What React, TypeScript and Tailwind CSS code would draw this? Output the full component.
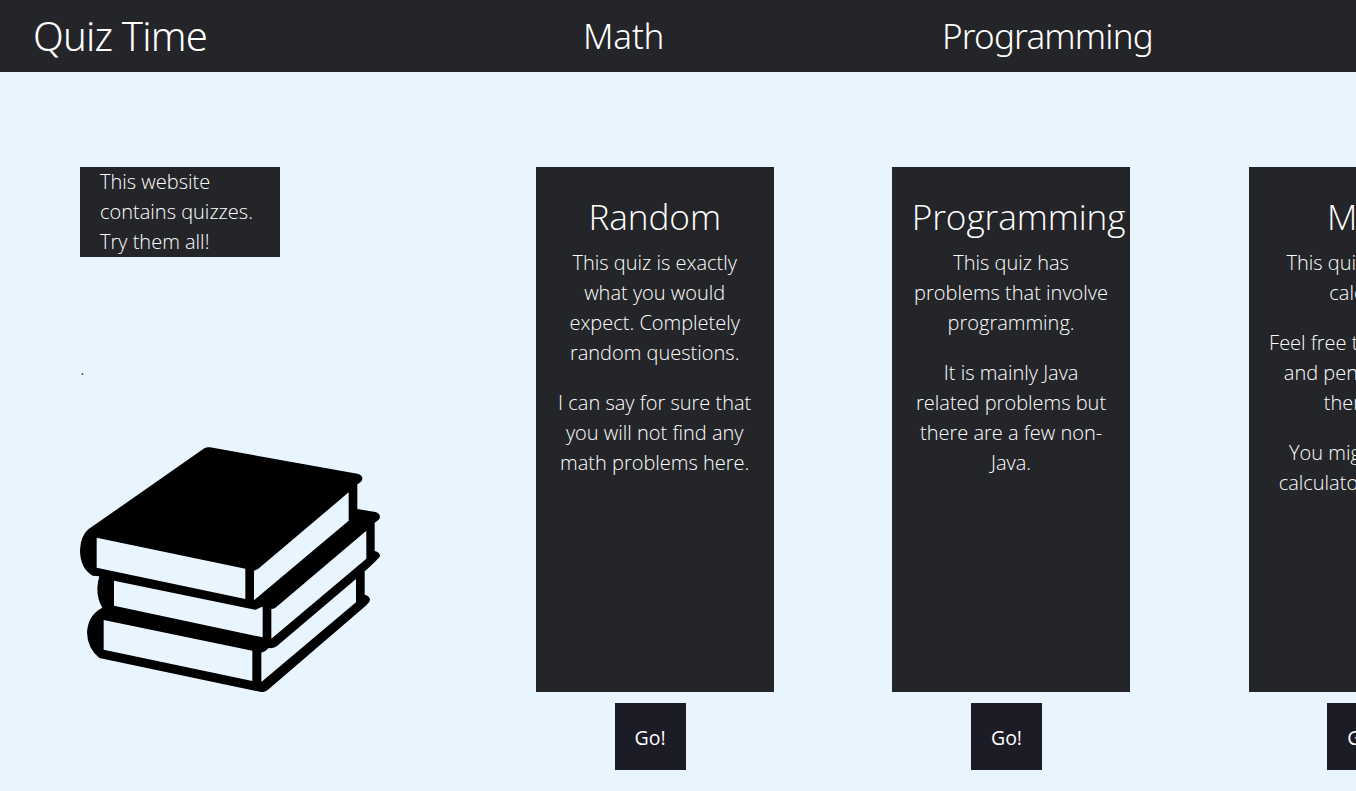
import React from "react";

type Quiz = { title: string; paragraphs: string[][] };

const quizzes: Quiz[] = [
  {
    title: "Random",
    paragraphs: [
      ["This quiz is exactly", "what you would", "expect. Completely", "random questions."],
      ["I can say for sure that", "you will not find any", "math problems here."],
    ],
  },
  {
    title: "Programming",
    paragraphs: [
      ["This quiz has", "problems that involve", "programming."],
      ["It is mainly Java", "related problems but", "there are a few non-", "Java."],
    ],
  },
  {
    title: "Math",
    paragraphs: [
      ["This quiz is mostly", "calculus."],
      ["Feel free to use paper", "and pencil to solve", "them out."],
      ["You might need a", "calculator for some."],
    ],
  },
];

function Books() {
  return (
    <svg className="block h-[245px] w-[300px]" viewBox="30 51 900 735" role="img" aria-label="Stack of books">
      <path
        fillRule="evenodd"
        d="M55 298 L403 55 Q411 50 420 52 L862 131 Q878 135 877 147 Q876 156 862 163 V237 L916 246 Q930 250 930 262 Q928 271 914 278 V363 Q930 367 930 378 Q929 384 884 424 V494 Q900 498 900 510 Q899 517 890 525 L594 779 Q585 787 574 786 L88 684 Q52 655 51 607 Q54 555 97 533 Q82 510 82 475 Q83 455 88 439 L68 437 Q30 415 30 360 Q32 318 55 298Z
        M80 323 V413 L526 507 V416Z
        M552 422 V511 L836 272 V187 L564 417Z
        M132 452 V527 L578 622 V530 Q568 532 562 537 Q556 541 548 538Z
        M604 537 V626 L889 386 V302 L620 530 Q614 537 604 537Z
        M101 570 V659 L547 753 V662Z
        M574 668 V756 L858 517 V447 L621 648 Q612 656 596 654 Q587 665 574 668Z"
      />
    </svg>
  );
}

function QuizCard({ title, paragraphs }: Quiz) {
  return (
    <div className="w-[238px] shrink-0">
      <section className="flex h-[525px] flex-col bg-[#242529] pt-[26px] pr-5 pl-[19.4px] text-center">
        <h2 className="mb-[9px] h-[46px] text-[35.2px] leading-[46px] tracking-[-0.1px]">{title}</h2>
        <div className="flex flex-col gap-5">
          {paragraphs.map((lines) => (
            <p key={lines[0]} className="text-xl leading-[30px] whitespace-nowrap">
              {lines.map((line) => (
                <span key={line} className="block">{line}</span>
              ))}
            </p>
          ))}
        </div>
      </section>
      <button className="mt-[11px] ml-[78.6px] block h-[67px] w-[71px] bg-[#1c1c26] pt-[3px] text-[19.5px] font-medium">Go!</button>
    </div>
  );
}

export default function App() {
  return (
    <div className="h-[791px] w-full overflow-hidden bg-[#e8f5ff] font-['Open_Sans',sans-serif] font-light text-white">
      <header className="flex h-[72px] items-center bg-[#242529] pl-[33px] font-['Noto_Sans',sans-serif] whitespace-nowrap">
        <h1 className="w-[550px] shrink-0 text-[40px] tracking-[-0.8px]">Quiz Time</h1>
        <nav className="flex text-[35px]">
          <a className="w-[359px] shrink-0 tracking-[-0.2px]">Math</a>
          <a className="tracking-[-0.8px]">Programming</a>
        </nav>
      </header>
      <main className="flex pt-[95px] pl-20">
        <aside className="w-[456px] shrink-0">
          <p className="w-[200px] bg-[#242529] px-5 text-xl leading-[30px]">This website contains quizzes. Try them all!</p>
          <p className="mt-[99px] mb-[61px] h-[30px] text-xl leading-[24px] text-[#212529]">.</p>
          <Books />
        </aside>
        <div className="flex gap-[118.4px]">
          {quizzes.map((quiz) => (
            <QuizCard key={quiz.title} {...quiz} />
          ))}
        </div>
      </main>
    </div>
  );
}
